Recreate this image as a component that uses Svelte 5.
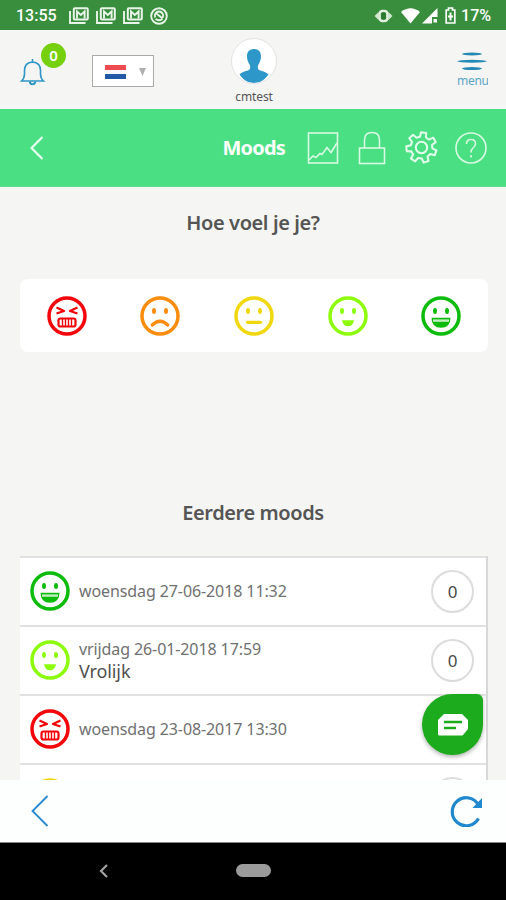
<script lang="ts">
  type Mood = 'angry' | 'sad' | 'neutral' | 'happy' | 'great'

  interface Entry {
    mood: Mood
    date?: string
    note?: string
    comments?: number
  }

  const colors: Record<Mood, string> = {
    angry: '#f30509',
    sad: '#fb8c0c',
    neutral: '#f1d70e',
    happy: '#8cfc0b',
    great: '#0cbb0c'
  }

  const moods: Mood[] = ['angry', 'sad', 'neutral', 'happy', 'great']

  const entries: Entry[] = [
    { mood: 'great', date: 'woensdag 27-06-2018 11:32', comments: 0 },
    { mood: 'happy', date: 'vrijdag 26-01-2018 17:59', note: 'Vrolijk', comments: 0 },
    { mood: 'angry', date: 'woensdag 23-08-2017 13:30', comments: 0 },
    { mood: 'neutral' }
  ]

  // Gear outline, starting from the tooth at the top
  function gearPath(): string {
    const points: string[] = []
    const teeth = 7
    const step = (Math.PI * 2) / teeth
    const corners = [
      [-0.28, 10.6],
      [-0.17, 14.8],
      [0.17, 14.8],
      [0.28, 10.6]
    ]
    for (let i = 0; i < teeth; i++) {
      const angle = i * step - 1.43
      for (const [offset, r] of corners) {
        const x = 16 + r * Math.cos(angle + offset)
        const y = 16 + r * Math.sin(angle + offset)
        points.push(`${x.toFixed(2)} ${y.toFixed(2)}`)
      }
    }
    return `M${points.join('L')}Z`
  }
</script>

{#snippet face(mood: Mood)}
  <svg class="face" viewBox="0 0 40 40" style="color: {colors[mood]}">
    <circle cx="20" cy="20" r="18" fill="none" stroke="currentColor" stroke-width="3.5" />
    {#if mood === 'angry'}
      <g fill="none" stroke="currentColor" stroke-width="2.2" stroke-linejoin="round">
        <path d="M9.5 11.5l7.500 3.500-7.500 2.500M30.500 11.500L23 15l7.500 2.500" />
        <rect x="11.500" y="22.500" width="17" height="8" rx="2" />
        <path d="M15.500 23v7M18.500 23v7M21.500 23v7M24.500 23v7" stroke-width="1.400" />
      </g>
    {:else}
      <ellipse cx="14" cy="15" rx="2" ry="2.900" fill="currentColor" />
      <ellipse cx="26" cy="15" rx="2" ry="2.900" fill="currentColor" />
    {/if}
    {#if mood === 'sad'}
      <path d="M12.200 29q7.800-7.500 15.600 0" fill="none" stroke="currentColor" stroke-width="3.200" stroke-linecap="round" />
    {:else if mood === 'neutral'}
      <path d="M13.500 26.300h13" stroke="currentColor" stroke-width="3.300" stroke-linecap="round" />
    {:else if mood === 'happy'}
      <path d="M14 24.300h12q-1 6-6 6t-6-6z" fill="currentColor" />
    {:else if mood === 'great'}
      <path d="M10.500 21.800h19q0 10-9.500 10t-9.500-10z" fill="currentColor" />
      <path d="M12 24.600h16" stroke="#fff" stroke-opacity="0.750" stroke-width="2.400" />
    {/if}
  </svg>
{/snippet}

{#snippet mail()}
  <svg width="20" height="17" viewBox="0 0 20 17" fill="none" stroke="#e9f5e9">
    <path d="M1 4v12h15.500" stroke-width="1.900" />
    <rect x="4.800" y="1.200" width="14" height="11.300" rx="1" stroke-width="2" />
    <path d="M8 11.500V4.500l3.800 3.500 3.800-3.500v7" stroke-width="1.900" />
  </svg>
{/snippet}

<div class="phone">
  <div class="status">
    <span class="clock">13:55</span>
    <div class="notifications">
      {@render mail()}
      {@render mail()}
      {@render mail()}
      <svg width="18" height="18" viewBox="0 0 18 18" fill="none" stroke="#e9f5e9">
        <circle cx="9" cy="9" r="7.800" stroke-width="1.900" />
        <path d="M5.200 10.500a4.200 4.200 0 1 1 7.600 0M5.500 12q3.500 2.500 7 0M6.500 6.500l6 5" stroke-width="1.900" />
      </svg>
    </div>
    <div class="system">
      <svg width="19" height="14" viewBox="0 0 19 14">
        <path d="M.500 7l4-4v8zM18.500 7l-4-4v8z" fill="#cfe6cf" />
        <rect x="5.500" y="2" width="8" height="10" rx="3" fill="none" stroke="#e2f1e2" stroke-width="2.600" />
        <rect x="7.500" y="3.500" width="4" height="7" rx="1" fill="#2b7830" />
      </svg>
      <svg class="wifi" width="19" height="16" viewBox="0 0 19 16">
        <path d="M0 4Q9.500-3.500 19 4L9.500 15.500z" fill="#fff" />
      </svg>
      <svg class="signal" width="16" height="16" viewBox="0 0 16 16">
        <path d="M15.500 0v9H10v6.500H0z" fill="#fff" />
        <path d="M11.500 11h3.500v3.500h-3.500z" fill="#fff" />
      </svg>
      <svg class="battery" width="11" height="17" viewBox="0 0 11 17">
        <path d="M3.500 1h4v2h2.300v13H1.200V3h2.300z" fill="none" stroke="#fff" stroke-width="1.700" />
        <path d="M5.500 5.500v8M3 9.500h5" stroke="#fff" stroke-width="1.900" />
      </svg>
      <span>17%</span>
    </div>
  </div>

  <header class="header">
    <div class="bell">
      <svg width="26" height="28" viewBox="0 0 26 28" fill="none" stroke="#2f96c6" stroke-width="1.600">
        <path d="M12.500 1v2.500M1.500 23h22q-3-2.500-3-7v-3.500q0-8-8-8.500-8 .5-8 8.500V16q0 4.500-3 7z" />
        <path d="M9.800 23.500a2.700 2.700 0 0 0 5.400 0" stroke-width="2" />
      </svg>
      <span class="badge">0</span>
    </div>
    <button class="language" aria-label="Taal">
      <span class="flag"></span>
      <svg width="7" height="8" viewBox="0 0 7 8"><path d="M0 0h7L3.500 8z" fill="#b0b0b0" /></svg>
    </button>
    <div class="profile">
      <div class="avatar">
        <svg width="44" height="44" viewBox="0 0 44 44">
          <path
            d="M22 10c4.800 0 7.100 3 7 7.500-.1 3.500-1.200 6-2.600 8-.8 1.300-.9 4.500.4 5.300 2.200 1.300 7 1.800 9.700 4.700C33 40.500 28 44 22 44S11 40.500 7.500 35.500c2.700-2.900 7.500-3.400 9.700-4.700 1.300-.8 1.200-4 .4-5.300-1.400-2-2.500-4.500-2.600-8-.1-4.500 2.200-7.500 7-7.500z"
            fill="#2d97c9"
          />
        </svg>
      </div>
      <span>cmtest</span>
    </div>
    <div class="menu">
      <svg width="30" height="20" viewBox="0 0 30 20" fill="#2489b5">
        <ellipse cx="15" cy="2" rx="10" ry="1.400" />
        <ellipse cx="15" cy="9.300" rx="14.500" ry="1.500" />
        <ellipse cx="15" cy="16.600" rx="10" ry="1.500" />
      </svg>
      <span>menu</span>
    </div>
  </header>

  <nav class="toolbar">
    <svg class="back" width="14" height="24" viewBox="0 0 14 24" fill="none" stroke="#e7fff0" stroke-width="2.200">
      <path d="M12.500 1L1.500 12l11 11" />
    </svg>
    <h1>Moods</h1>
    <div class="tools">
      <svg width="32" height="32" viewBox="0 0 32 32" fill="none" stroke="#d8fae4" stroke-width="1.600">
        <rect x="1.500" y="1" width="29" height="30" />
        <path d="M2 28l4-4 3 1.500 4-4 2 1 5-7 4 5 6-9.500" />
      </svg>
      <svg width="32" height="34" viewBox="0 0 32 34" fill="none" stroke="#d8fae4" stroke-width="1.600">
        <rect x="3.500" y="17" width="25" height="15.500" />
        <path d="M8.500 17V9q0-7.500 7.500-7.500T23.500 9v8" />
      </svg>
      <svg width="33" height="33" viewBox="0 0 32 32" fill="none" stroke="#e2fceb" stroke-width="2" stroke-linejoin="round">
        <path d={gearPath()} />
        <circle cx="16" cy="16" r="5.500" />
      </svg>
      <svg width="32" height="32" viewBox="0 0 32 32" fill="none" stroke="#d8fae4" stroke-width="1.600">
        <circle cx="16" cy="16" r="15" />
        <path d="M11.500 12q0-4.500 4.500-4.500t4.500 4q0 2.500-2.500 4.500-2 1.600-2 4.500M16 23v2.500" />
      </svg>
    </div>
  </nav>

  <main class="content">
    <h2 class="question">Hoe voel je je?</h2>
    <div class="picker">
      {#each moods as mood}
        <button class="mood" aria-label={mood}>{@render face(mood)}</button>
      {/each}
    </div>
    <h2 class="history">Eerdere moods</h2>
    <ul class="list">
      {#each entries as entry}
        <li class="row">
          {@render face(entry.mood)}
          <div class="info">
            {#if entry.date}
              <span class="date">{entry.date}</span>
            {/if}
            {#if entry.note}
              <span class="note">{entry.note}</span>
            {/if}
          </div>
          <span class="count">{entry.comments ?? ''}</span>
        </li>
      {/each}
    </ul>
    <button class="chat" aria-label="Chat">
      <svg width="30" height="22" viewBox="0 0 30 22">
        <path d="M6 0h18l6 6v9l-5 6q-.5.500-1.500.500H1.500Q0 21.500 0 20V6z" fill="#fff" />
        <path d="M6 8h18M6 14h12" stroke="#1cab1c" stroke-width="2.400" />
      </svg>
    </button>
  </main>

  <footer class="browser">
    <svg width="18" height="32" viewBox="0 0 18 32" fill="none" stroke="#2689d3" stroke-width="1.800">
      <path d="M16.500 1L1.500 16l15 15" />
    </svg>
    <svg width="33" height="32" viewBox="0 0 33 32">
      <path d="M28.500 10A14 14 0 1 0 28.500 23.500" fill="none" stroke="#2088ce" stroke-width="3.200" />
      <path d="M32 3v10h-9.500z" fill="#2088ce" />
    </svg>
  </footer>

  <div class="android">
    <svg width="9" height="14" viewBox="0 0 9 14" fill="none" stroke="#a3a3a3" stroke-width="2.200">
      <path d="M8 1L2 7l6 6" />
    </svg>
    <span class="home"></span>
  </div>
</div>

<style>
  :global(body) {
    margin: 0;
  }

  .phone {
    display: flex;
    flex-direction: column;
    width: 506px;
    height: 900px;
    overflow: hidden;
    background: #f5f5f4;
    color: #555;
    font-family: 'Noto Sans', sans-serif;
  }

  h1,
  h2,
  ul {
    margin: 0;
    padding: 0;
  }

  button {
    padding: 0;
    border: none;
    background: none;
    font: inherit;
  }

  svg {
    display: block;
    flex: none;
  }

  .status {
    display: flex;
    align-items: center;
    box-sizing: border-box;
    flex: none;
    height: 30px;
    padding: 1px 15px 0 16px;
    background: #388e3c;
    color: #fff;
    font-family: Roboto, sans-serif;
    font-size: 16px;
    font-weight: 500;
  }

  .clock {
    width: 53px;
  }

  .notifications {
    display: flex;
    align-items: center;
    gap: 7px;
  }

  .system {
    display: flex;
    align-items: center;
    margin-left: auto;
  }

  .wifi {
    margin-left: 8px;
  }

  .signal {
    margin-left: 2px;
  }

  .battery {
    margin-right: 5px;
    margin-left: 7px;
  }

  .header {
    display: flex;
    flex: none;
    height: 79px;
  }

  .bell {
    position: relative;
    box-sizing: border-box;
    width: 72px;
    padding: 28px 0 0 20px;
  }

  .badge {
    position: absolute;
    top: 13px;
    left: 41px;
    width: 25px;
    border-radius: 50%;
    background: #76d00e;
    color: #fff;
    font-size: 15px;
    font-weight: 600;
    line-height: 25px;
    text-align: center;
  }

  .language {
    display: flex;
    align-items: center;
    justify-content: space-between;
    box-sizing: border-box;
    width: 62px;
    height: 32px;
    margin: 25px 0 0 20px;
    padding: 1px 7px 0 12px;
    border: 1px solid #aaa;
    background: #fff;
  }

  .flag {
    width: 21px;
    height: 14px;
    background: linear-gradient(#ed4b50 0 36%, #f8f8fc 36% 66%, #2159a6 66%);
  }

  .profile {
    display: flex;
    flex-direction: column;
    align-items: center;
    width: 60px;
    margin: 8px 0 0 70px;
    font-size: 12px;
    letter-spacing: -0.100px;
    line-height: 16px;
  }

  .avatar {
    overflow: hidden;
    width: 44px;
    height: 44px;
    margin-bottom: 5px;
    border: 1px solid #e2e2e2;
    border-radius: 50%;
    background: #fff;
  }

  .menu {
    width: 31px;
    margin: 22px 18px 0 auto;
    overflow: hidden;
    color: #5aa6c8;
    font-size: 12px;
    line-height: 15px;
  }

  .menu span {
    display: block;
    margin-top: 1px;
    letter-spacing: -0.300px;
  }

  .toolbar {
    display: flex;
    align-items: center;
    box-sizing: border-box;
    flex: none;
    height: 78px;
    padding: 0 19px 0 30px;
    border-bottom: 1px solid #5edb8b;
    background: #4adf82;
    color: #fff;
  }

  h1 {
    margin-left: auto;
    font-size: 20px;
    font-weight: 700;
    letter-spacing: -0.800px;
  }

  .tools {
    display: flex;
    align-items: center;
    gap: 17px;
    margin-left: 22px;
  }

  .content {
    position: relative;
    flex: none;
    height: 593px;
    overflow: hidden;
  }

  h2 {
    font-size: 20px;
    font-weight: 600;
    letter-spacing: -0.400px;
    line-height: 28px;
    text-align: center;
  }

  .question {
    margin-top: 22px;
  }

  .picker {
    display: flex;
    align-items: center;
    height: 73px;
    margin: 42px 18px 0 20px;
    border-radius: 8px;
    background: #fff;
  }

  .mood {
    display: flex;
    flex: 1;
    justify-content: center;
  }

  .face {
    flex: none;
    width: 40px;
    height: 40px;
  }

  .history {
    margin-top: 147px;
  }

  .list {
    margin: 29px 18px 0 20px;
    border-right: 2px solid #d8d8d8;
    list-style: none;
  }

  .row {
    display: flex;
    align-items: center;
    box-sizing: border-box;
    height: 69px;
    padding: 0 12px 1px 10px;
    border-top: 2px solid #e1e1e1;
    background: #fff;
  }

  .info {
    display: flex;
    flex-direction: column;
    margin-left: 9px;
    color: #707070;
    font-size: 16px;
    letter-spacing: -0.100px;
    line-height: 22px;
  }

  .note {
    color: #505050;
    font-size: 18px;
  }

  .count {
    box-sizing: border-box;
    width: 43px;
    height: 43px;
    margin-left: auto;
    border: 2px solid #dcdcdc;
    border-radius: 50%;
    color: #4a4a4a;
    font-size: 17px;
    line-height: 39px;
    text-align: center;
  }

  .chat {
    position: absolute;
    top: 507px;
    left: 422px;
    display: flex;
    align-items: center;
    justify-content: center;
    width: 61px;
    height: 61px;
    border-radius: 50% 6px 50% 50%;
    background: #1cab1c;
    box-shadow: 0 2px 4px rgba(0, 0, 0, 0.3);
  }

  .browser {
    display: flex;
    align-items: center;
    justify-content: space-between;
    box-sizing: border-box;
    flex: none;
    height: 62px;
    padding: 0 23px 0 31px;
    background: #fdfefe;
  }

  .android {
    display: flex;
    flex: 1;
    align-items: center;
    box-sizing: border-box;
    padding: 0 0 2px 99px;
    border-top: 1px solid #888;
    background: #000;
  }

  .home {
    width: 35px;
    height: 13px;
    margin-left: 128px;
    border-radius: 7px;
    background: #9b9b9b;
  }
</style>
